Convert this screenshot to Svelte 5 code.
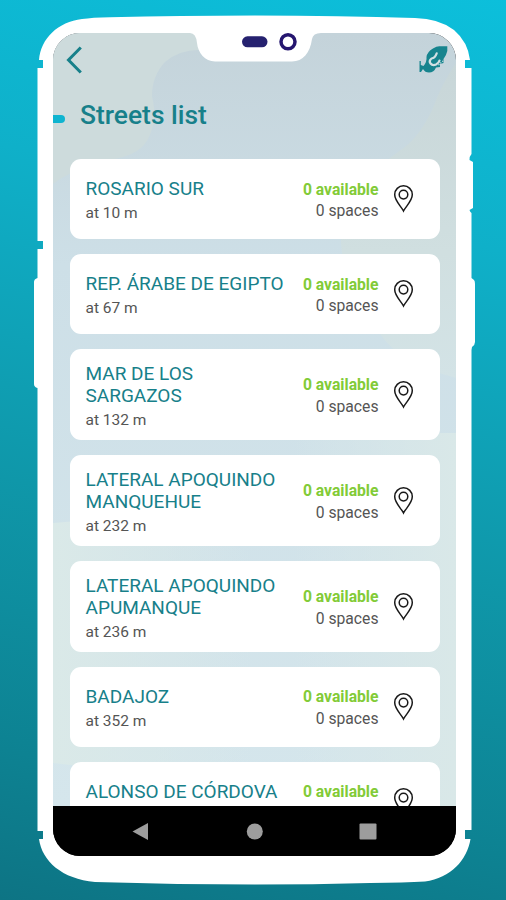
<script>
  const streets = [
    { lines: ['ROSARIO SUR'], distance: 10, height: 80 },
    { lines: ['REP. ÁRABE DE EGIPTO'], distance: 67, height: 80 },
    { lines: ['MAR DE LOS', 'SARGAZOS'], distance: 132, height: 91 },
    { lines: ['LATERAL APOQUINDO', 'MANQUEHUE'], distance: 232, height: 91 },
    { lines: ['LATERAL APOQUINDO', 'APUMANQUE'], distance: 236, height: 91 },
    { lines: ['BADAJOZ'], distance: 352, height: 79.5 },
    { lines: ['ALONSO DE CÓRDOVA'], distance: null, height: 80 }
  ];
</script>

<main class="stage">
  <svg class="frame" width="506" height="900" viewBox="0 0 506 900" aria-hidden="true">
    <path
      fill="#fff"
      d="M39 60C41 38 58 22 82 19Q92 17.5 110 17.2Q180 15.5 255 15.5Q340 15.5 415 18Q439 18.500 454 30Q468 42 470 60H465V68H471.500V154Q469.500 156 469.500 160L473 162V208L469.500 210Q470 212 471.500 213V278L474 280Q475 281 475 284V342Q475 345 472 347L471.500 350V830H465V839H470.500C467 860 451 878 425 881.500Q405 882.500 370 883Q312 884.500 255 884.500Q180 884.500 95 882C62 879 42 861 39 839H43V831H37.500V388Q34 387 34 384V282Q34 279 37.500 278V249H43V241H37.500V68H43V60Z"
    />
  </svg>

  <section class="screen">
    <svg class="scenery" width="403" height="773" viewBox="0 0 403 773" aria-hidden="true">
      <defs>
        <linearGradient id="shade" x2="0" y2="1">
          <stop stop-color="#c4d3da" />
          <stop offset=".3" stop-color="#cddfe7" />
          <stop offset="1" stop-color="#d5e6ec" />
        </linearGradient>
        <linearGradient id="land" x2="0" y2="1">
          <stop stop-color="#c8d6d8" />
          <stop offset=".6" stop-color="#d0dfe0" />
          <stop offset="1" stop-color="#d3e3e6" />
        </linearGradient>
        <linearGradient id="fadeRight">
          <stop stop-color="#d9e8e9" stop-opacity="0" />
          <stop offset="1" stop-color="#d9e8e8" />
        </linearGradient>
        <linearGradient id="fadeLeft">
          <stop stop-color="#dae9e8" />
          <stop offset="1" stop-color="#dae9e8" stop-opacity="0" />
        </linearGradient>
      </defs>
      <rect width="403" height="773" fill="url(#shade)" />
      <path fill="#cddbdc" d="M0 0H146V17Q126 17 112 29Q99 43 99 63Q105 87 95 106Q88 120 66 125Q20 135 0 151Z" />
      <path fill="url(#land)" d="M403 30Q388 52 380 75Q366 106 345 119Q315 140 298 170Q287 192 288 210Q290 245 315 270Q320 300 345 320Q370 337 403 345Z" />
      <path fill="url(#fadeLeft)" d="M0 490Q90 480 200 520V740Q80 740 0 730Z" />
      <path fill="url(#fadeRight)" d="M240 400H403V773H240Z" />
    </svg>

    <header class="topbar">
      <svg class="back" width="20" height="30" viewBox="0 0 20 30" role="img" aria-label="Back">
        <path d="M15.800 2.500L3.500 15L15.800 27.500" fill="none" stroke="#17808a" stroke-width="3" />
      </svg>
      <svg class="bird" width="30" height="30" viewBox="0 0 30 30" role="img" aria-label="Logo">
        <path fill="#17848e" d="M8.500 12Q9 7 15 3.500Q19 1 22 1.300H29.300V6Q28.500 10 25.500 14V18L22 19V22L18 22.500Q16 27.500 11 27.500Q7 27.500 5 24L3 27H1.500V16H2.800V20L5.500 21Q9 17 8.500 12Z" />
        <path d="M18.700 8.300Q17 13 13.500 13.500Q10.500 16 12.500 18.500Q14.500 21 18 19.500Q21 18 21.500 15.500" fill="none" stroke="#d2e0e3" stroke-width="2.200" stroke-linecap="round" />
        <path d="M20.500 20L25.500 15.500" stroke="#d2e0e3" stroke-width="1.200" stroke-dasharray="1.200 1.300" />
      </svg>
    </header>

    <div class="heading"><i></i><h1>Streets list</h1></div>

    <ul class="list">
      {#each streets as street}
        <li class="card" style:height={`${street.height}px`}>
          <div class="place">
            <h2>{#each street.lines as line}<span>{line}</span>{/each}</h2>
            <p>{#if street.distance !== null}at {street.distance} m{/if}</p>
          </div>
          <div class="status">
            <strong>0 available</strong>
            <span>{#if street.distance !== null}0 spaces{/if}</span>
          </div>
          <svg class="pin" width="22" height="30" viewBox="0 0 22 30" aria-hidden="true">
            <g fill="none" stroke="#191919" stroke-width="1.500">
              <path d="M10.500 27C8 22 1.700 17 1.700 10.600A8.800 8.800 0 0 1 19.300 10.600C19.300 17 13 22 10.500 27Z" />
              <circle cx="10.500" cy="10.600" r="4.300" />
            </g>
          </svg>
        </li>
      {/each}
    </ul>

    <nav class="system">
      <svg width="403" height="50" viewBox="0 0 403 50" aria-hidden="true">
        <g fill="#9d9d9d">
          <path d="M79.500 25.500L95 17V34Z" />
          <circle cx="201.800" cy="25.500" r="8" />
          <rect x="306.500" y="17.500" width="17" height="16" rx="1" />
        </g>
      </svg>
    </nav>
  </section>

  <svg class="notch" width="134" height="31" viewBox="0 0 134 31" aria-hidden="true">
    <path fill="#fff" d="M0 0H134V2H131Q123 2 122 8C120 22 113 30.500 102 30.500H25C15 30.500 8 22 7 12Q6 2 0 2Z" />
    <rect x="52" y="5.300" width="25.500" height="11" rx="5.500" fill="#25216f" />
    <circle cx="98" cy="10.700" r="7" fill="#fff" stroke="#25166f" stroke-width="3.500" />
  </svg>
</main>

<style>
  :global(body) {
    margin: 0;
  }

  .stage {
    position: relative;
    box-sizing: border-box;
    width: 506px;
    height: 900px;
    padding: 33px 50.500px 0 53px;
    overflow: hidden;
    background: linear-gradient(192deg, #0cbfdb 0%, #0fb0c9 25%, #0f97a9 58%, #0d8292 85%, #0d7484 100%);
    font-family: Roboto, "Liberation Sans", sans-serif;
  }

  .frame {
    position: absolute;
    inset: 0;
  }

  .screen {
    position: relative;
    display: flex;
    flex-direction: column;
    height: 822.5px;
    overflow: hidden;
    border-radius: 27px;
    background: #000;
  }

  .scenery {
    position: absolute;
    inset: 0;
  }

  .topbar {
    position: relative;
    display: flex;
    justify-content: space-between;
    height: 44px;
    padding: 12px 8px 0 12px;
    box-sizing: border-box;
    flex: none;
  }

  .heading {
    position: relative;
    display: flex;
    align-items: center;
    gap: 15px;
    height: 76px;
    padding-bottom: 6px;
    box-sizing: border-box;
    flex: none;
  }

  .heading i {
    width: 12px;
    height: 8px;
    margin-top: 13px;
    border-radius: 0 4px 4px 0;
    background: #0fb4d0;
  }

  h1 {
    margin: 5px 0 0;
    color: #17808a;
    font-size: 26.400px;
    line-height: 32px;
    font-weight: 500;
  }

  .list {
    position: relative;
    display: flex;
    flex-direction: column;
    gap: 15px;
    flex: 1;
    min-height: 0;
    margin: 0;
    padding: 6px 16px 0 16.500px;
    overflow: hidden;
    list-style: none;
  }

  .card {
    display: flex;
    align-items: center;
    flex: none;
    box-sizing: border-box;
    padding: 0 25px 0 16px;
    border-radius: 11px;
    background: #fff;
  }

  .place {
    flex: 1;
    min-width: 0;
    padding-top: 4px;
  }

  h2 {
    margin: 0;
    color: #17808a;
    font-size: 19px;
    line-height: 22px;
    font-weight: 400;
    white-space: nowrap;
  }

  h2 span {
    display: block;
  }

  p {
    min-height: 22px;
    margin: 2px 0 0;
    color: #555;
    font-size: 15.500px;
    line-height: 22px;
  }

  .status {
    display: flex;
    flex-direction: column;
    align-items: flex-end;
    padding-top: 2px;
    color: #555;
    font-size: 15.700px;
    line-height: 21.500px;
    white-space: nowrap;
  }

  .status span {
    min-height: 21.500px;
  }

  .status strong {
    color: #82cb37;
    font-weight: 700;
  }

  .pin {
    margin-left: 14px;
  }

  .system {
    position: relative;
    height: 50px;
    flex: none;
    background: #000;
  }

  .system svg {
    display: block;
  }

  .notch {
    position: absolute;
    top: 31px;
    left: 190px;
  }
</style>
